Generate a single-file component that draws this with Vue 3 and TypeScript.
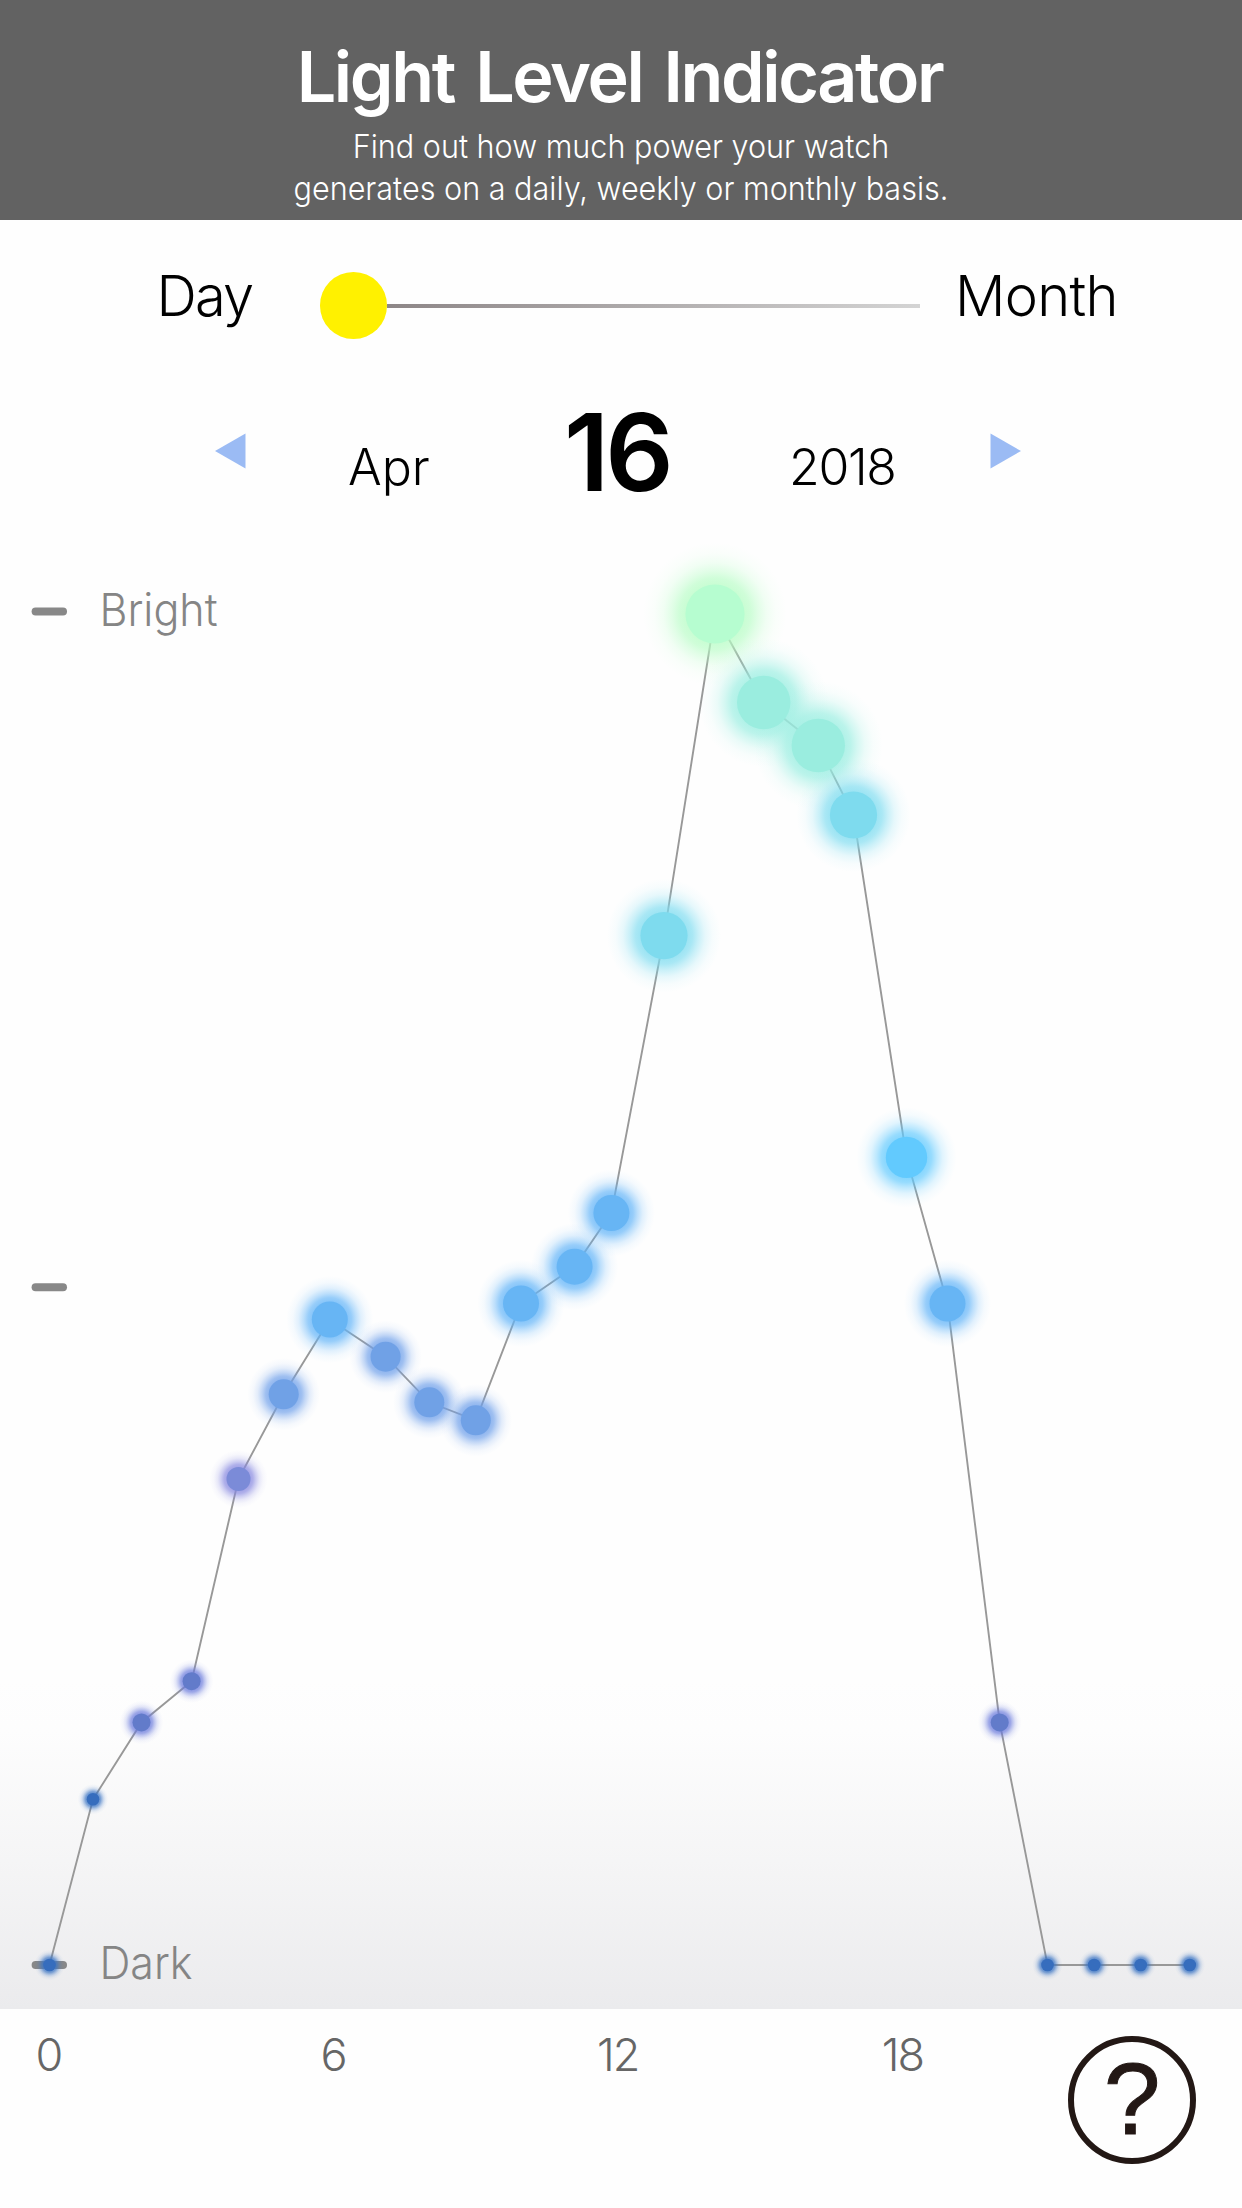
<script setup lang="ts">
interface Tone {
  r: number
  fill: string
  glow: string
}

const tones: Record<string, Tone> = {
  navy: { r: 6.3, fill: '#366dbd', glow: '#3a74c4' },
  indigo: { r: 9, fill: '#627bca', glow: '#6b7bdc' },
  violet: { r: 12, fill: '#7b8bd8', glow: '#8788e0' },
  steel: { r: 15, fill: '#70a1e6', glow: '#6fa0ea' },
  azure: { r: 18, fill: '#67b5f4', glow: '#62b4f8' },
  sky: { r: 20.7, fill: '#62cafe', glow: '#62cafe' },
  cyan: { r: 23.6, fill: '#7edbee', glow: '#7edcf0' },
  teal: { r: 26.7, fill: '#9aeddf', glow: '#99eee1' },
  mint: { r: 29.6, fill: '#b6fdd0', glow: '#b8fdc6' },
}

const samples: [number, number, string][] = [
  [49.5, 1965, 'navy'],
  [93, 1799.3, 'navy'],
  [141.5, 1722.4, 'indigo'],
  [191.6, 1681.2, 'indigo'],
  [238.5, 1479, 'violet'],
  [283.7, 1394.3, 'steel'],
  [329.8, 1319.5, 'azure'],
  [385.6, 1356.7, 'steel'],
  [429.3, 1402.3, 'steel'],
  [475.8, 1420.3, 'steel'],
  [521, 1303.5, 'azure'],
  [574.6, 1266.7, 'azure'],
  [611.4, 1213, 'azure'],
  [664, 935.6, 'cyan'],
  [715, 614, 'mint'],
  [763.7, 702.5, 'teal'],
  [818.3, 745.5, 'teal'],
  [853.5, 815, 'cyan'],
  [906.5, 1157.4, 'sky'],
  [947.5, 1303.5, 'azure'],
  [999.7, 1722.4, 'indigo'],
  [1047.5, 1965, 'navy'],
  [1094.2, 1965, 'navy'],
  [1140.7, 1965, 'navy'],
  [1189.8, 1965, 'navy'],
]

const readings = samples.map(([x, y, tone]) => ({ x, y, tone, ...tones[tone] }))
const linePoints = readings.map((p) => `${p.x},${p.y}`).join(' ')

const levels = [
  { y: 611.4, label: 'Bright', baseline: 626, width: 115 },
  { y: 1287.3, label: '', baseline: 0, width: 0 },
  { y: 1965, label: 'Dark', baseline: 1979, width: 90 },
]
const hours = ['0', '6', '12', '18']
</script>

<template>
  <main class="screen">
    <header class="banner">
      <h1>Light Level Indicator</h1>
      <p>Find out how much power your watch<br />generates on a daily, weekly or monthly basis.</p>
    </header>

    <section class="range">
      <span class="day">Day</span>
      <div class="slider"><i class="knob"></i><i class="track"></i></div>
      <span class="month">Month</span>
    </section>

    <section class="date">
      <svg class="prev" width="31" height="36" viewBox="0 0 31 36"><path d="M0 18 30.5 0.5V35.5Z" fill="#9bbbf4" /></svg>
      <span class="mon">Apr</span>
      <strong>16</strong>
      <span class="year">2018</span>
      <svg class="next" width="31" height="36" viewBox="0 0 31 36"><path d="M31 18 0.5 0.5V35.5Z" fill="#9bbbf4" /></svg>
    </section>

    <svg class="chart" width="1242" height="1499" viewBox="0 510 1242 1499">
      <defs>
        <linearGradient id="floor" x1="0" y1="0" x2="0" y2="1">
          <stop offset="0" stop-color="#ebebed" stop-opacity="0" />
          <stop offset="0.16" stop-color="#ebebed" stop-opacity="0.06" />
          <stop offset="0.5" stop-color="#ebebed" stop-opacity="0.42" />
          <stop offset="1" stop-color="#ebebed" />
        </linearGradient>
        <radialGradient v-for="(t, name) in tones" :id="`glow-${name}`" :key="name">
          <stop offset="0.41" :stop-color="t.glow" stop-opacity="0.76" />
          <stop offset="0.5" :stop-color="t.glow" stop-opacity="0.66" />
          <stop offset="0.6" :stop-color="t.glow" stop-opacity="0.42" />
          <stop offset="0.72" :stop-color="t.glow" stop-opacity="0.19" />
          <stop offset="0.85" :stop-color="t.glow" stop-opacity="0.06" />
          <stop offset="1" :stop-color="t.glow" stop-opacity="0" />
        </radialGradient>
      </defs>
      <rect x="0" y="1680" width="1242" height="329" fill="url(#floor)" />
      <g v-for="l in levels" :key="l.y">
        <rect x="31.6" :y="l.y - 4" width="35.4" height="8" rx="4" fill="#888" />
        <text v-if="l.label" x="99.5" :y="l.baseline" :textLength="l.width + 3" lengthAdjust="spacingAndGlyphs" class="level">{{ l.label }}</text>
      </g>
      <polyline :points="linePoints" fill="none" stroke="#989898" stroke-width="1.9" />
      <circle v-for="(p, i) in readings" :key="`g${i}`" :cx="p.x" :cy="p.y" :r="p.r * 2.42" :fill="`url(#glow-${p.tone})`" />
      <circle v-for="(p, i) in readings" :key="`d${i}`" :cx="p.x" :cy="p.y" :r="p.r" :fill="p.fill" />
    </svg>

    <footer class="foot">
      <div class="hours"><span v-for="h in hours" :key="h">{{ h }}</span></div>
      <button class="help" aria-label="Help">?</button>
    </footer>
  </main>
</template>

<style>
body { margin: 0; background: #fff; }
</style>

<style scoped>
.screen {
  width: 1242px;
  height: 2208px;
  overflow: hidden;
  background: #fefefe;
  font-family: Inter, "Liberation Sans", sans-serif;
  font-weight: 300;
  color: #000;
}
.banner {
  box-sizing: border-box;
  height: 220px;
  padding-top: 36px;
  background: #626262;
  color: #fff;
  text-align: center;
}
h1 { margin: 0 3px 0 0; font-size: 70px; line-height: 82px; font-weight: 600; white-space: nowrap; letter-spacing: -2.4px; word-spacing: 6px; }
p { margin: 7px 0 0; font-size: 33px; line-height: 42px; white-space: nowrap; transform: scaleX(0.926); }
.range { display: flex; height: 172px; }
.range span { font-size: 56px; line-height: 68px; margin-top: 42px; white-space: nowrap; }
.day { width: 163.5px; margin-left: 156.5px; letter-spacing: -1.8px; }
.slider { display: flex; align-items: center; height: 68px; width: 600px; margin-top: 51.5px; }
.knob { width: 66.6px; height: 66.6px; border-radius: 50%; background: #fff100; }
.track { flex: 1; height: 4px; background: linear-gradient(90deg, #8d8687, #d4d4d4); }
.month { margin-left: 35px; letter-spacing: -0.7px; }
.date { display: flex; align-items: flex-start; height: 118px; }
.date svg { margin-top: 41px; flex: none; }
.prev { margin-left: 215px; }
.date span { font-size: 50px; line-height: 60px; margin-top: 45px; white-space: nowrap; }
.mon { width: 216px; margin-left: 102px; }
.date strong { width: 225px; font-size: 107px; line-height: 130px; font-weight: 600; margin-top: -5.5px; white-space: nowrap; letter-spacing: -4px; }
.date .year { width: 201px; letter-spacing: -1.3px; }
.chart { display: block; }
.level { font-size: 45px; fill: #858585; }
.foot { display: flex; height: 199px; }
.hours { display: flex; flex: none; width: 1162px; margin-left: -94px; }
.hours span { width: 284.7px; margin-top: 18.5px; font-size: 45px; line-height: 54px; letter-spacing: -2px; color: #666; text-align: center; }
.help {
  box-sizing: border-box;
  width: 128px;
  height: 128px;
  margin: 27px 0 0;
  padding: 0;
  border: 6px solid #231815;
  border-radius: 50%;
  background: none;
  color: #231815;
  font: 102px/112px "Liberation Sans", sans-serif;
  padding-bottom: 3px;
  -webkit-text-stroke: 1px #231815;
}
</style>
